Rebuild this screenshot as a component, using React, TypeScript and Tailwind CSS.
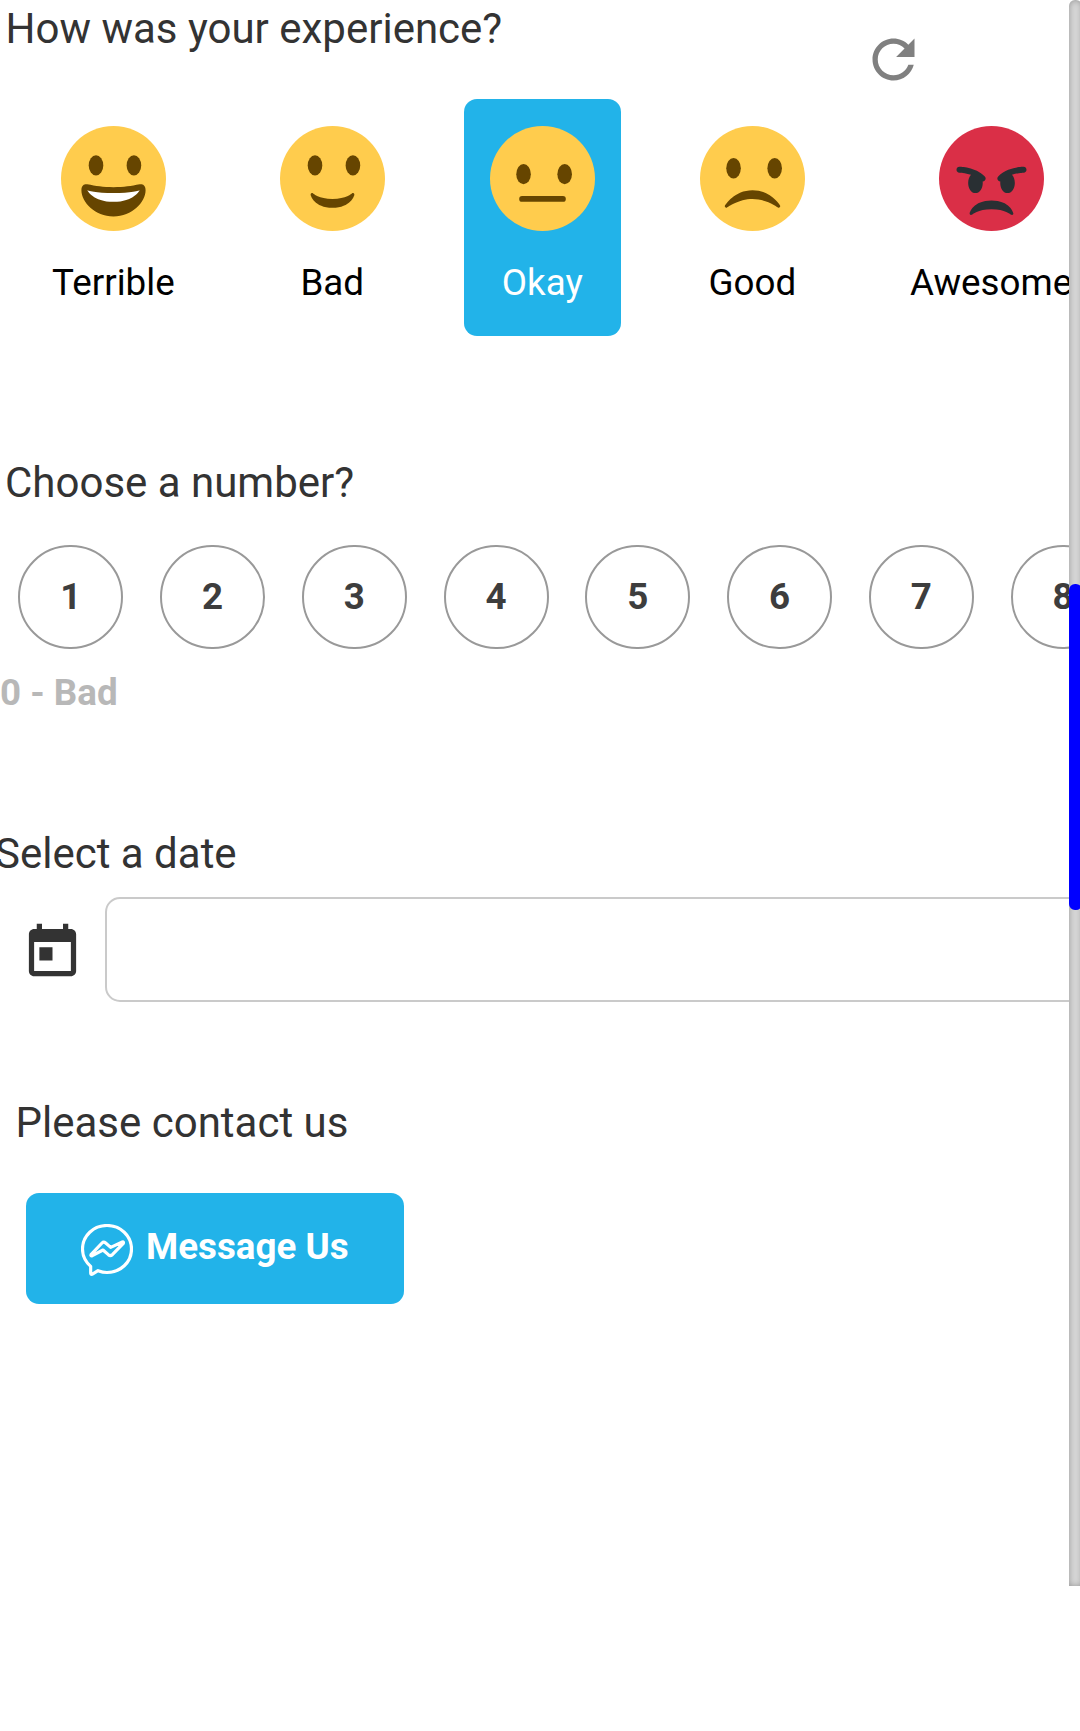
import React from "react";

const BROWN = "#664500";

function Face({ color = "#FFCC4D", children }: { color?: string; children: React.ReactNode }) {
  return (
    <svg viewBox="0 0 36 36" className="block size-[105px]">
      <circle cx="18" cy="18" r="18" fill={color} />
      {children}
    </svg>
  );
}

function Eyes({ left, right, y }: { left: number; right: number; y: number }) {
  return (
    <g fill={BROWN}>
      <ellipse cx={left} cy={y} rx="2.5" ry="3.5" />
      <ellipse cx={right} cy={y} rx="2.5" ry="3.5" />
    </g>
  );
}

const moods = [
  {
    label: "Terrible",
    face: (
      <Face>
        <Eyes left={12} right={25} y={13.5} />
        <path fill={BROWN} d="M18 21c-3.623 0-6.027-.422-9-1-.679-.131-2 0-2 2 0 4 4.595 9 11 9 6.404 0 11-5 11-9 0-2-1.321-2.132-2-2-2.973.578-5.377 1-9 1z" />
        <path fill="#fff" d="M9 22s3 1 9 1 9-1 9-1-2 4-9 4-9-4-9-4z" />
      </Face>
    ),
  },
  {
    label: "Bad",
    face: (
      <Face>
        <Eyes left={12} right={25} y={13.5} />
        <path fill={BROWN} d="M10.515 23.621C10.56 23.8 11.683 28 18 28c6.318 0 7.44-4.2 7.485-4.379.055-.217-.043-.442-.237-.554-.195-.111-.439-.078-.6.077C24.629 23.163 22.694 25 18 25s-6.63-1.837-6.648-1.855C11.256 23.05 11.128 23 11 23c-.084 0-.169.021-.246.064-.196.112-.294.339-.239.557z" />
      </Face>
    ),
  },
  {
    label: "Okay",
    selected: true,
    face: (
      <Face>
        <Eyes left={11.5} right={25.6} y={16.5} />
        <rect x="10" y="24" width="16" height="2" rx="1" fill={BROWN} />
      </Face>
    ),
  },
  {
    label: "Good",
    face: (
      <Face>
        <Eyes left={11.5} right={25.6} y={14.5} />
        <path fill={BROWN} d="M8.665 27.871c.178.161.444.171.635.029.039-.029 3.922-2.9 8.7-2.9 4.766 0 8.662 2.871 8.7 2.9.191.142.457.13.635-.029.177-.16.217-.424.094-.628C27.3 27.029 24.212 22 18 22s-9.301 5.028-9.429 5.243c-.123.205-.084.468.094.628z" />
      </Face>
    ),
  },
  {
    label: "Awesome",
    face: (
      <Face color="#DA2F47">
        <path fill="#292F33" d="M25.485 29.879C25.44 29.7 24.317 25.5 18 25.5c-6.318 0-7.44 4.2-7.485 4.379-.055.217.043.442.237.554.195.109.439.079.6-.077.019-.019 1.954-1.856 6.648-1.856s6.63 1.837 6.648 1.855c.096.095.224.145.352.145.084 0 .169-.021.246-.064.196-.112.294-.339.239-.557zm-9.778-12.586C12.452 14.038 7.221 14 7 14c-.552 0-.999.447-.999.998-.001.552.446 1 .998 1.002.029 0 1.925.022 3.983.737-.593.64-.982 1.634-.982 2.763 0 1.934 1.119 3.5 2.5 3.5s2.5-1.566 2.5-3.5c0-.174-.019-.34-.037-.507.013 0 .025.007.037.007.256 0 .512-.098.707-.293.391-.391.391-1.023 0-1.414zM29 14c-.221 0-5.451.038-8.707 3.293-.391.391-.391 1.023 0 1.414.195.195.451.293.707.293.013 0 .024-.007.036-.007-.016.167-.036.333-.036.507 0 1.934 1.119 3.5 2.5 3.5s2.5-1.566 2.5-3.5c0-1.129-.389-2.123-.982-2.763 2.058-.715 3.954-.737 3.984-.737.551-.002.998-.45.997-1.002-.001-.551-.447-.998-.999-.998z" />
      </Face>
    ),
  },
];

const numbers = [1, 2, 3, 4, 5, 6, 7, 8];

function Heading({ children }: { children: React.ReactNode }) {
  return <h2 className="text-[42px] leading-[50px] whitespace-nowrap text-[#333]">{children}</h2>;
}

export default function App() {
  return (
    <div className="relative h-[1731px] w-[1080px] overflow-hidden bg-white font-['Roboto',sans-serif]">
      <main className="flex flex-col">
        <header className="flex h-[99px] items-start justify-between pt-1 pr-[155.5px] pl-[5.5px]">
          <Heading>How was your experience?</Heading>
          <button className="mt-[23.5px]" aria-label="Reset">
            <svg viewBox="0 0 24 24" className="block size-[63px]" fill="#808080">
              <path d="M17.65 6.35C16.2 4.9 14.21 4 12 4c-4.42 0-7.99 3.58-7.99 8s3.57 8 7.99 8c3.73 0 6.84-2.55 7.73-6h-2.08c-.82 2.33-3.04 4-5.65 4-3.31 0-6-2.69-6-6s2.69-6 6-6c1.66 0 3.14.69 4.22 1.78L13 11h7V4l-2.35 2.35z" />
            </svg>
          </button>
        </header>

        <section className="flex gap-[53.1px] pl-[26.1px]">
          {moods.map((m) => (
            <button
              key={m.label}
              className={
                m.selected
                  ? "flex h-[237px] shrink-0 flex-col items-center rounded-[13px] bg-[#22B3E9] px-[26px] pt-[27px] text-white"
                  : "flex h-[237px] shrink-0 flex-col items-center rounded-[13px] px-[26px] pt-[27px] text-black"
              }
            >
              {m.face}
              <span className="mt-[31px] text-[36.75px] leading-[42px] whitespace-nowrap">{m.label}</span>
            </button>
          ))}
        </section>

        <section className="mt-[122px] flex flex-col">
          <div className="pl-[5px]">
            <Heading>Choose a number?</Heading>
          </div>
          <div className="mt-[37px] flex gap-[36.75px] pl-[18.3px]">
            {numbers.map((n) => (
              <button
                key={n}
                className="flex h-[104px] w-[105px] shrink-0 items-center justify-center rounded-full border-2 border-[#999] pb-px text-[36.75px] leading-[42px] font-bold text-[#3d3d3d]"
              >
                {n}
              </button>
            ))}
          </div>
          <p className="mt-[23px] text-[36.75px] leading-[42px] font-bold text-[#b8b8b8]">0 - Bad</p>
        </section>

        <section className="mt-[115px] flex flex-col">
          <div className="-ml-[5px]">
            <Heading>Select a date</Heading>
          </div>
          <div className="mt-[18px] flex items-start">
            <svg viewBox="0 0 24 24" className="mt-[23.5px] ml-[21px] block size-[63px] shrink-0" fill="#333">
              <path d="M19 3h-1V1h-2v2H8V1H6v2H5c-1.11 0-1.99.9-1.99 2L3 19c0 1.1.89 2 2 2h14c1.1 0 2-.9 2-2V5c0-1.1-.9-2-2-2zm0 16H5V8h14v11zM7 10h5v5H7z" />
            </svg>
            <div className="ml-[21px] h-[105px] w-[1100px] shrink-0 rounded-[15px] border-2 border-[#cacaca]" />
          </div>
        </section>

        <section className="mt-24 flex flex-col items-start">
          <div className="pl-[15.5px]">
            <Heading>Please contact us</Heading>
          </div>
          <button className="mt-[45px] ml-[26px] flex h-[111px] w-[378px] items-start rounded-[13px] bg-[#22B3E9] pt-[31px] pl-[55px] text-white">
            <svg
              viewBox="243 402 156 156"
              className="block size-[52px] shrink-0"
              fill="none"
              stroke="#fff"
              strokeWidth="9.5"
              strokeLinejoin="round"
              strokeLinecap="round"
            >
              <path d="M272 529C257 516 247.500 498 247.500 477C247.500 437 281 406.500 321 406.500C361 406.500 394.500 437 394.500 477C394.500 517 361 547.500 321 547.500C311 547.500 302 545 294 542L276 553Q272 554 272 549Z" />
              <path d="M273 494L306 459Q311 454 317 459L332 472L367 456Q372 455 370 460L337 494Q331 499 325 494L309 480L277 497Q271 499 273 494Z" />
            </svg>
            <span className="mt-0.5 ml-[13px] text-[36.75px] leading-[42px] font-bold whitespace-nowrap">Message Us</span>
          </button>
        </section>
      </main>

      {/* Scrollbar overlay */}
      <div className="absolute top-0 left-[1069px] h-[1586px] w-[13px] rounded-t-[6px] bg-[#d6d6d6] shadow-[inset_0_0_6px_rgba(0,0,0,0.3)]">
        <div className="absolute top-[584px] left-0 h-[326px] w-[13px] rounded-[6px] bg-[#0000ff]" />
      </div>
    </div>
  );
}
